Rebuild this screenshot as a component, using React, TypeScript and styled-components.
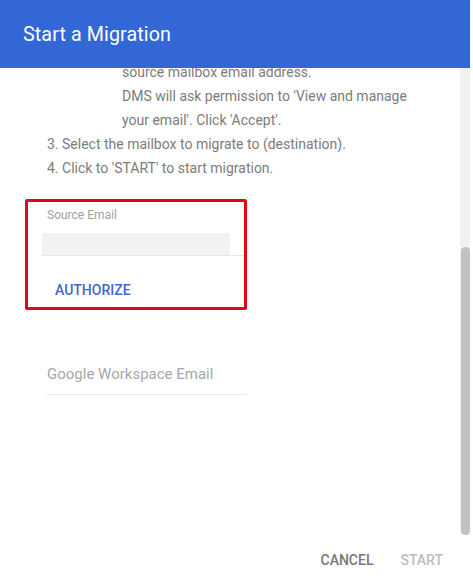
import * as React from 'react';
import styled, { createGlobalStyle } from 'styled-components';

const GlobalStyle = createGlobalStyle`
  html, body {
    margin: 0;
    padding: 0;
    background: #ffffff;
    font-family: Roboto, "Liberation Sans", Arial, sans-serif;
  }
`;

// scroll geometry of the dialog body (content is scrolled to the bottom)
const VIEWPORT_HEIGHT = 467;
const CONTENT_HEIGHT = 757;
const SCROLL_TOP = 290;

const Dialog = styled.div`
  width: 470px;
  height: 584px;
  display: flex;
  flex-direction: column;
  background: #ffffff;
`;

const Header = styled.div`
  flex: 0 0 68px;
  display: flex;
  align-items: center;
  padding-left: 23px;
  background-color: #3367d6;
  color: #ffffff;
  font-size: 19.7px;
  font-weight: 400;
  letter-spacing: 0.1px;
`;

const Body = styled.div`
  flex: 0 0 ${VIEWPORT_HEIGHT}px;
  display: flex;
  overflow: hidden;
`;

const Viewport = styled.div`
  flex: 1 1 auto;
  overflow: hidden;
`;

const ScrollTrack = styled.div`
  flex: 0 0 10px;
  display: flex;
  flex-direction: column;
  background: #f1f1f1;
`;

const ScrollThumb = styled.div`
  width: 9px;
  margin-left: 1px;
  border-radius: 5px;
  background: #c1c1c1;
`;

const Steps = styled.div`
  margin-top: -8px;
  padding-left: 47px;
`;

const Line = styled.div<{ indent?: boolean }>`
  padding-left: ${({ indent }) => (indent ? '75px' : '0')};
  font-size: 14px;
  line-height: 24px;
  color: #7c7c7c;
  white-space: nowrap;
`;

const Highlight = styled.div`
  box-sizing: border-box;
  width: 222px;
  height: 111px;
  margin: 19px 0 0 25px;
  padding-top: 5px;
  border: 3px solid #e2061a;
  border-radius: 2px;
  overflow: hidden;
`;

const Field = styled.div`
  width: 202px;
  margin-left: 14px;
  border-bottom: 1px solid #e6e6e6;
`;

const FieldLabel = styled.div`
  padding-left: 5px;
  font-size: 12px;
  line-height: 16px;
  color: #a3a3a3;
`;

const FieldInput = styled.div`
  width: 188px;
  height: 22px;
  margin-top: 10px;
  background: #f2f2f2;
`;

const TextButton = styled.button<{ tone: 'primary' | 'neutral' | 'disabled' }>`
  height: 34px;
  padding: 0 12px;
  border: none;
  background: transparent;
  font-family: inherit;
  font-size: 14px;
  font-weight: 500;
  letter-spacing: 0;
  text-transform: uppercase;
  cursor: pointer;
  color: ${({ tone }) =>
    tone === 'primary' ? '#3d68d0' : tone === 'neutral' ? '#777777' : '#bdbdbd'};
`;

const AuthorizeButton = styled(TextButton)`
  margin: 17px 0 0 15px;
`;

const DestinationField = styled.div`
  width: 200px;
  margin: 53px 0 0 47px;
  padding-bottom: 9px;
  border-bottom: 1px solid #e6e6e6;
  font-size: 15px;
  line-height: 22px;
  color: #a8a8a8;
`;

const Footer = styled.div`
  flex: 0 0 49px;
  display: flex;
  align-items: center;
  justify-content: flex-end;
  gap: 3px;
  padding-right: 15px;
`;

const App: React.FC = () => {
  const thumbTop = Math.round((SCROLL_TOP / CONTENT_HEIGHT) * VIEWPORT_HEIGHT);
  const thumbHeight = Math.round((VIEWPORT_HEIGHT / CONTENT_HEIGHT) * VIEWPORT_HEIGHT);

  return (
    <>
      <GlobalStyle />
      <Dialog>
        <Header>Start a Migration</Header>
        <Body>
          <Viewport>
            <Steps>
              <Line indent>source mailbox email address.</Line>
              <Line indent>DMS will ask permission to 'View and manage</Line>
              <Line indent>your email'. Click 'Accept'.</Line>
              <Line>3. Select the mailbox to migrate to (destination).</Line>
              <Line>4. Click to 'START' to start migration.</Line>
            </Steps>
            <Highlight>
              <Field>
                <FieldLabel>Source Email</FieldLabel>
                <FieldInput />
              </Field>
              <AuthorizeButton tone="primary">Authorize</AuthorizeButton>
            </Highlight>
            <DestinationField>Google Workspace Email</DestinationField>
          </Viewport>
          <ScrollTrack>
            <ScrollThumb style={{ marginTop: thumbTop, height: thumbHeight }} />
          </ScrollTrack>
        </Body>
        <Footer>
          <TextButton tone="neutral">Cancel</TextButton>
          <TextButton tone="disabled">Start</TextButton>
        </Footer>
      </Dialog>
    </>
  );
};

export default App;
